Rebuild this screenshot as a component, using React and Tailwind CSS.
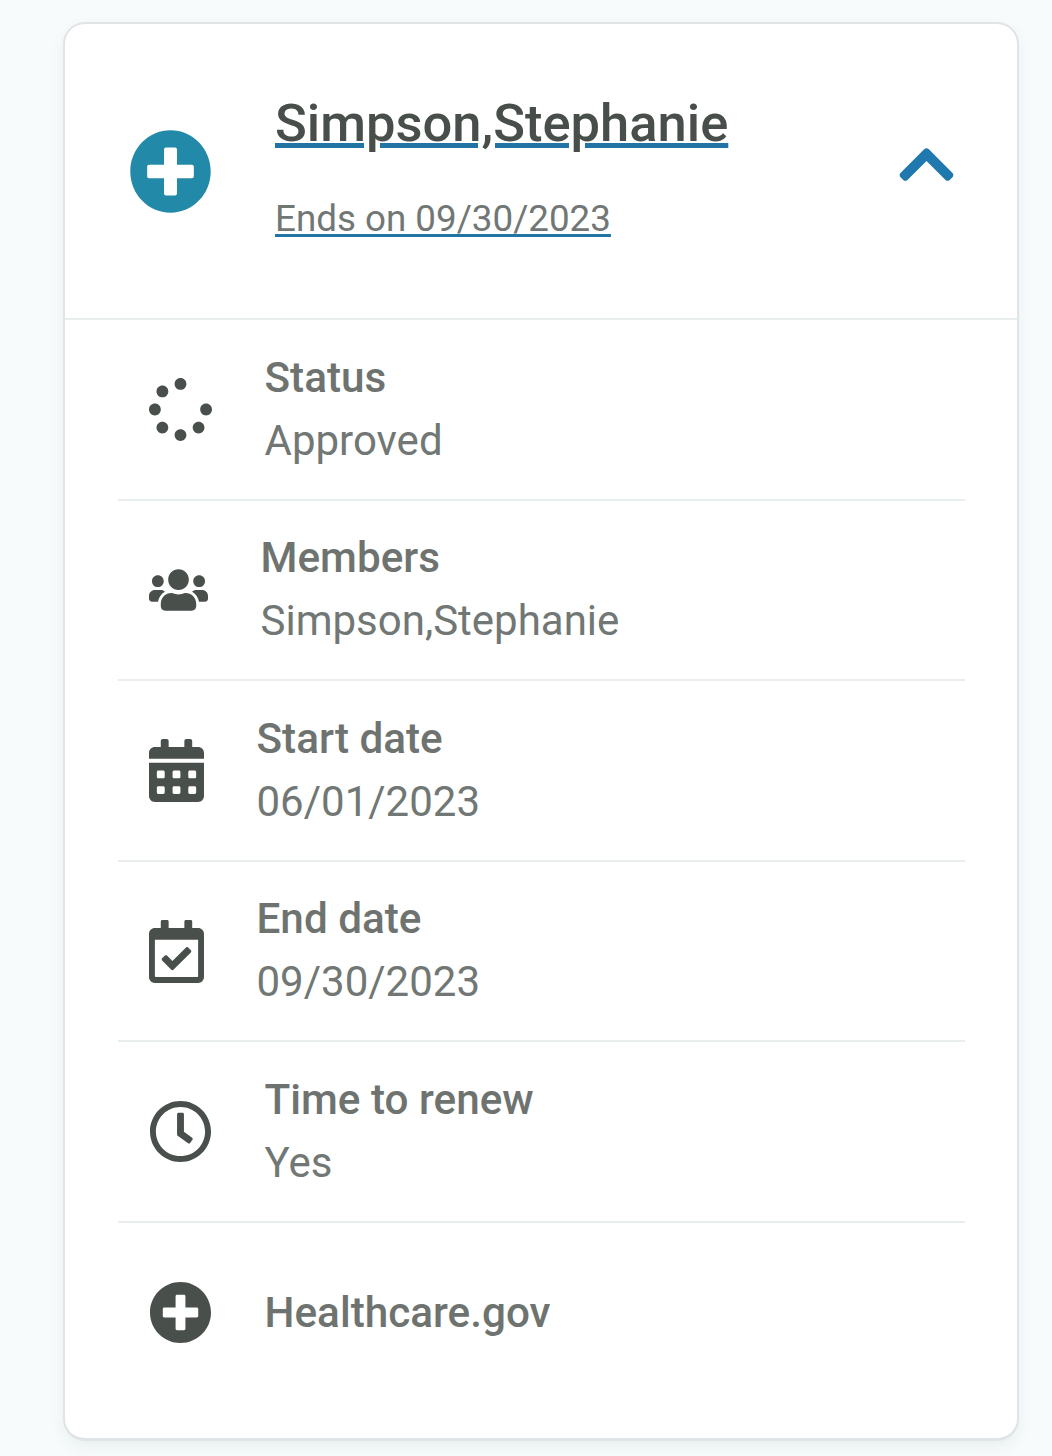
import { FaSpinner, FaUsers, FaCalendarAlt, FaRegCalendarCheck, FaRegClock, FaPlusCircle, FaChevronUp } from 'react-icons/fa';

const rows = [
  { Icon: FaSpinner, size: 'w-[63px] h-[63px]', label: 'Status', value: 'Approved' },
  { Icon: FaUsers, size: 'w-[59px] h-[48px]', label: 'Members', value: 'Simpson,Stephanie' },
  { Icon: FaCalendarAlt, size: 'w-[55px] h-[63px]', label: 'Start date', value: '06/01/2023' },
  { Icon: FaRegCalendarCheck, size: 'w-[55px] h-[63px] mt-[2px]', label: 'End date', value: '09/30/2023' },
  { Icon: FaRegClock, size: 'w-[63px] h-[63px]', label: 'Time to renew', value: 'Yes' },
  { Icon: FaPlusCircle, size: 'w-[63px] h-[63px]', label: 'Healthcare.gov' },
];

export default function App() {
  return (
    <div className="min-h-[1456px] bg-[#f7fbfb] pt-[22px] pl-[63px] font-['Roboto',sans-serif]">
      <div className="w-[956px] h-[1419px] bg-white border-2 border-b-[3px] border-[#e1e4e6] rounded-[22px] shadow-[0_6px_14px_rgba(60,80,80,0.07)]">
        <div className="h-[296px] flex items-center pl-[64px] pr-[59px] border-b-2 border-[#e8eeee]">
          <FaPlusCircle preserveAspectRatio="none" className="w-[83px] h-[85px] text-[#2389a8] shrink-0" />
          <div className="ml-[63px] flex-1 flex flex-col gap-[45px] mb-[10px]">
            <a className="text-[52.5px] leading-[60px] font-medium text-[#484f4a] underline decoration-[#2274a5] decoration-[5px] underline-offset-[2px]">Simpson,Stephanie</a>
            <a className="text-[36.75px] leading-[42px] text-[#717774] underline decoration-[#2274a5] decoration-[3px] underline-offset-[3px]">Ends on 09/30/2023</a>
          </div>
          <FaChevronUp className="w-[63px] h-[63px] text-[#1f78ae] shrink-0 mb-[14px]" />
        </div>
        <div className="pl-[53px] pr-[52px]">
          {rows.map((row, i) => (
            <div key={row.label} className={`h-[180.5px] flex items-center gap-[52.5px] pl-[31px] ${i < 5 ? 'border-b-2 border-[#e8eeee]' : ''}`}>
              <row.Icon className={`${row.size} text-[#49504b] shrink-0`} />
              <div className="flex flex-col gap-[15px]">
                <div className="text-[42.25px] leading-[48px] font-medium text-[#6e7370]">{row.label}</div>
                {row.value && <div className="text-[42px] leading-[48px] text-[#717774]">{row.value}</div>}
              </div>
            </div>
          ))}
        </div>
      </div>
    </div>
  );
}
